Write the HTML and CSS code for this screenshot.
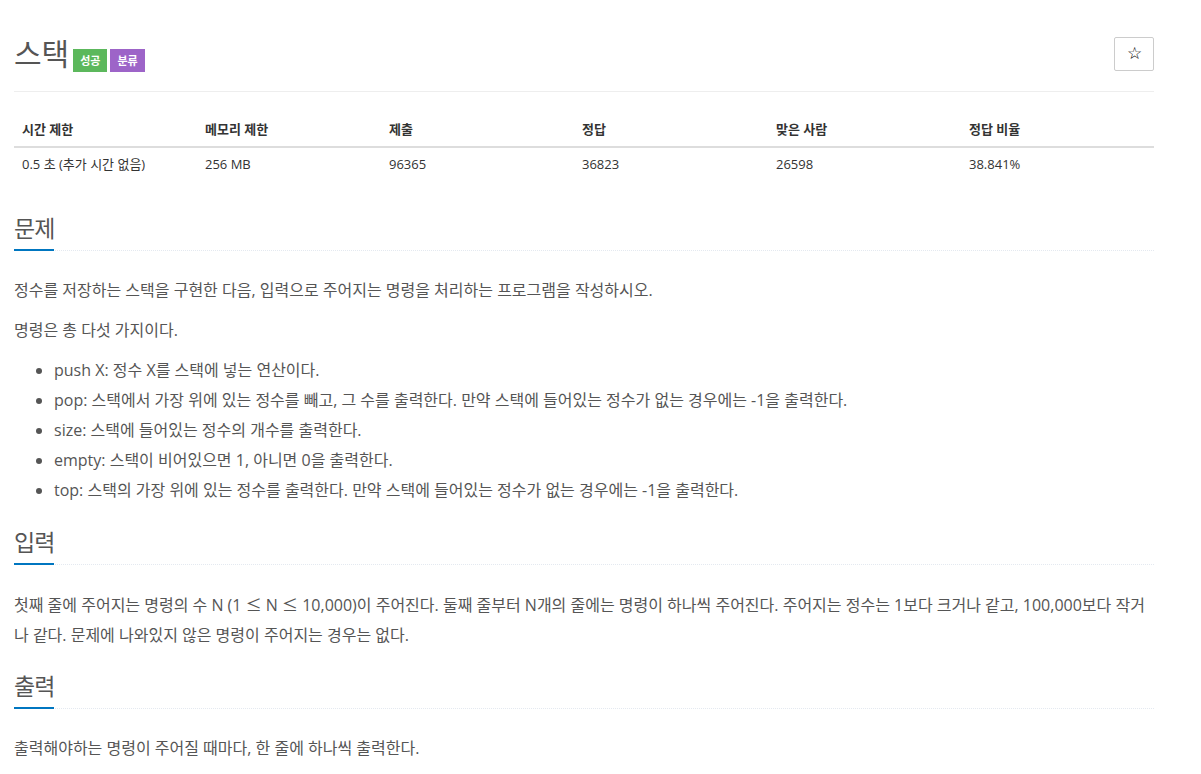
FILE: index.html
```html
<html>
<head>
    <meta charset="utf-8">
    <title>스택</title>
    <link rel="stylesheet" href="styles.css">
</head>
<body>
<div class="container">
    <div class="page-header">
        <h1>
            <span class="problem-title">스택</span>
            <span class="label label-success">성공</span>
            <span class="label label-purple">분류</span>
        </h1>
        <button type="button" class="btn-star">&#9734;</button>
    </div>

    <table class="problem-info">
        <thead>
            <tr>
                <th class="col-time">시간 제한</th>
                <th class="col-memory">메모리 제한</th>
                <th class="col-submit">제출</th>
                <th class="col-accept">정답</th>
                <th class="col-people">맞은 사람</th>
                <th>정답 비율</th>
            </tr>
        </thead>
        <tbody>
            <tr>
                <td>0.5 초 (추가 시간 없음)</td>
                <td>256 MB</td>
                <td>96365</td>
                <td>36823</td>
                <td>26598</td>
                <td>38.841%</td>
            </tr>
        </tbody>
    </table>

    <section class="problem-section">
        <div class="headline"><h2>문제</h2></div>
        <div class="problem-text">
            <p>정수를 저장하는 스택을 구현한 다음, 입력으로 주어지는 명령을 처리하는 프로그램을 작성하시오.</p>
            <p>명령은 총 다섯 가지이다.</p>
            <ul>
                <li>push X: 정수 X를 스택에 넣는 연산이다.</li>
                <li>pop: 스택에서 가장 위에 있는 정수를 빼고, 그 수를 출력한다. 만약 스택에 들어있는 정수가 없는 경우에는 -1을 출력한다.</li>
                <li>size: 스택에 들어있는 정수의 개수를 출력한다.</li>
                <li>empty: 스택이 비어있으면 1, 아니면 0을 출력한다.</li>
                <li>top: 스택의 가장 위에 있는 정수를 출력한다. 만약 스택에 들어있는 정수가 없는 경우에는 -1을 출력한다.</li>
            </ul>
        </div>
    </section>

    <section class="problem-section">
        <div class="headline"><h2>입력</h2></div>
        <div class="problem-text">
            <p>첫째 줄에 주어지는 명령의 수 N (1 <span class="sym">&le;</span> N <span class="sym">&le;</span> 10,000)이 주어진다. 둘째 줄부터 N개의 줄에는 명령이 하나씩 주어진다. 주어지는 정수는 1보다 크거나 같고, 100,000보다 작거나 같다. 문제에 나와있지 않은 명령이 주어지는 경우는 없다.</p>
        </div>
    </section>

    <section class="problem-section">
        <div class="headline"><h2>출력</h2></div>
        <div class="problem-text">
            <p>출력해야하는 명령이 주어질 때마다, 한 줄에 하나씩 출력한다.</p>
        </div>
    </section>
</div>
</body>
</html>
```

FILE: styles.css
```css
html, body {
    margin: 0;
    background-color: #fff;
    color: #333;
    font-family: "Open Sans", "Noto Sans CJK KR", sans-serif;
    font-size: 14px;
    line-height: 20px;
}

.container {
    width: 1140px;
    padding: 37px 0 0 14px;
}

.page-header {
    display: flex;
    align-items: flex-start;
    justify-content: space-between;
    padding-bottom: 20px;
    border-bottom: 1px solid #eee;
}

h1 {
    margin: 0;
    height: 34px;
    display: flex;
    align-items: flex-start;
    gap: 3px;
    font-weight: 400;
    line-height: 34px;
}

.problem-title {
    font-size: 30px;
    color: #555;
    margin-right: 1px;
}

.label {
    display: inline-block;
    padding: 0 7px;
    height: 23px;
    line-height: 23px;
    margin-top: 12px;
    font-size: 11px;
    font-weight: 700;
    color: #fff;
}

.label-success {
    background-color: #5cb85c;
}

.label-purple {
    background-color: #9d64c8;
}

.btn-star {
    width: 40px;
    height: 34px;
    border: 1px solid #ccc;
    border-radius: 2px;
    background-color: #fff;
    color: #000;
    font-size: 17px;
    line-height: 32px;
    padding: 0;
    cursor: pointer;
}

.problem-info {
    width: 100%;
    margin: 21px 0 21px;
    border-collapse: collapse;
}

.problem-info th,
.problem-info td {
    padding: 8px;
    text-align: left;
    font-size: 13px;
    line-height: 17px;
}

.problem-info th {
    border-bottom: 2px solid #ddd;
}

.col-time   {width: 167px;}
.col-memory {width: 168px;}
.col-submit {width: 177px;}
.col-accept {width: 178px;}
.col-people {width: 177px;}

.problem-section {
    color: #555;
    padding-top: 13px;
}

.headline {
    margin: 0 0 24px;
    border-bottom: 1px dotted #e4e9f0;
}

.headline h2 {
    display: inline-block;
    margin: 0 0 -1px;
    padding-bottom: 8px;
    border-bottom: 2px solid #0076c0;
    font-size: 23px;
    font-weight: 400;
    line-height: 26px;
    letter-spacing: -1px;
}

.problem-text {
    font-size: 16px;
    line-height: 30px;
}

.problem-text p {
    margin: 0 0 10px;
}

.problem-text ul {
    margin: 0 0 11px;
    padding-left: 40px;
}

.sym {
    font-family: "Noto Sans CJK KR", sans-serif;
}
```
